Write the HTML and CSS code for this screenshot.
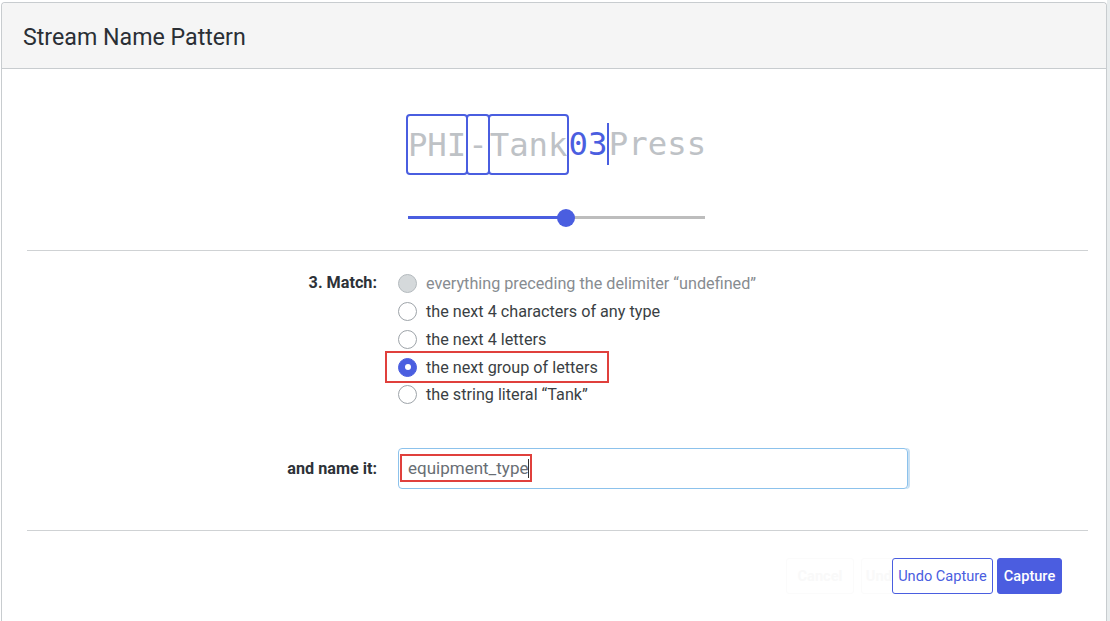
FILE: index.html
```html
<!DOCTYPE html>
<html>
<head>
<meta charset="utf-8">
<link rel="stylesheet" href="styles.css">
</head>
<body>
<div class="page">
  <div class="card">
    <div class="card-header">
      <h1 class="title">Stream Name Pattern</h1>
    </div>
    <div class="card-body">
      <div class="pattern-area">
        <div class="pattern">
          <span class="seg boxed">PHI</span><span class="seg boxed">-</span><span class="seg boxed">Tank</span><span class="seg active">03</span><span class="cursor"></span><span class="seg">Press</span>
        </div>
        <div class="slider">
          <div class="slider-fill"></div>
          <div class="slider-thumb"></div>
        </div>
      </div>
      <hr class="divider">
      <div class="form">
        <div class="form-label match-label">3. Match:</div>
        <div class="options">
          <label class="option disabled"><span class="radio"></span><span>everything preceding the delimiter “undefined”</span></label>
          <label class="option"><span class="radio"></span><span>the next 4 characters of any type</span></label>
          <label class="option"><span class="radio"></span><span>the next 4 letters</span></label>
          <label class="option selected highlighted"><span class="radio"></span><span>the next group of letters</span></label>
          <label class="option"><span class="radio"></span><span>the string literal “Tank”</span></label>
        </div>
        <div class="form-label name-label">and name it:</div>
        <div class="input-wrap">
          <div class="text-input"><span class="input-value">equipment_type<span class="caret"></span></span></div>
        </div>
      </div>
      <hr class="divider footer-divider">
      <div class="actions">
        <button class="btn ghost ghost-cancel">Cancel</button>
        <button class="btn ghost ghost-undo">Undo</button>
        <button class="btn outline">Undo Capture</button>
        <button class="btn primary">Capture</button>
      </div>
    </div>
  </div>
  <div class="side-strip"></div>
</div>
</body>
</html>
```

FILE: styles.css
```css
html, body {
  margin: 0;
  padding: 0;
  background: #ffffff;
}
body {
  font-family: Roboto, "Liberation Sans", Arial, sans-serif;
  color: #212529;
}
.page {
  display: flex;
  height: 621px;
  padding-top: 2px;
  padding-left: 1px;
  box-sizing: border-box;
  overflow: hidden;
}
.card {
  width: 1106px;
  border: 1px solid #c8cccf;
  border-radius: 4px;
  border-bottom: none;
  border-bottom-left-radius: 0;
  border-bottom-right-radius: 0;
  box-sizing: border-box;
  background: #fff;
  flex: none;
}
.side-strip {
  flex: 1;
  background: #e9edee;
  margin-top: -2px;
}
.card-header {
  height: 65px;
  background: #f5f5f5;
  border-bottom: 1px solid #c8cccf;
  border-radius: 4px 4px 0 0;
  display: flex;
  align-items: center;
  padding: 0 21px;
}
.title {
  margin: 0;
  font-size: 23.2px;
  font-weight: 400;
  color: #2a2f35;
  margin-top: 2px;
}
.card-body {
  padding: 0 18px 0 25px;
}
.pattern-area {
  display: flex;
  flex-direction: column;
  align-items: center;
  padding-top: 44px;
}
.pattern {
  display: flex;
  align-items: center;
  height: 62px;
  font-family: "DejaVu Sans Mono", "Liberation Mono", monospace;
  font-size: 32.3px;
  color: #bec2c6;
  position: relative;
  margin-left: -1px;
}
.seg {
  line-height: 58px;
  white-space: pre;
}
.seg.boxed {
  border: 2px solid #4a5ee0;
  border-radius: 4px;
  height: 57px;
  margin: 0 -2px;
}
.seg.boxed + .seg.boxed {
  margin-left: 0;
}
.seg.active {
  color: #4a5ee0;
  margin-left: 1px;
}
.cursor {
  width: 1.5px;
  height: 42px;
  background: #4a5ee0;
}
.slider {
  position: relative;
  width: 297px;
  height: 3px;
  background: #bdbdbd;
  margin-top: 41px;
  margin-left: -2px;
}
.slider-fill {
  width: 158px;
  height: 3px;
  background: #4a5ee0;
}
.slider-thumb {
  position: absolute;
  left: 149px;
  top: -7px;
  width: 18px;
  height: 18px;
  border-radius: 50%;
  background: #4a5ee0;
}
.divider {
  border: none;
  border-top: 1px solid #cfd2d4;
  margin: 31px 0 0 0;
}
.form {
  display: grid;
  grid-template-columns: 350px 1fr;
  column-gap: 21px;
  padding-top: 20px;
}
.form-label {
  text-align: right;
  font-weight: 700;
  font-size: 16.2px;
  color: #2d3238;
}
.match-label {
  line-height: 28px;
  margin-top: -2px;
}
.options {
  display: flex;
  flex-direction: column;
  margin-top: -1px;
}
.option {
  display: flex;
  align-items: center;
  height: 27.75px;
  font-size: 16.2px;
  color: #3a3f44;
  gap: 9px;
  align-self: flex-start;
  position: relative;
}
.radio {
  width: 19px;
  height: 19px;
  border-radius: 50%;
  border: 1px solid #9ea4a9;
  box-sizing: border-box;
  background: #fff;
  flex: none;
  position: relative;
}
.option.disabled {
  color: #878c91;
}
.option.disabled .radio {
  background: #d5d9db;
  border-color: #b4babe;
}
.option.selected .radio {
  background: #4a5ee0;
  border-color: #4a5ee0;
}
.option.selected .radio::after {
  content: "";
  position: absolute;
  left: 5.5px;
  top: 5.5px;
  width: 6px;
  height: 6px;
  border-radius: 50%;
  background: #fff;
}
.option.highlighted::after {
  content: "";
  position: absolute;
  left: -13px;
  right: -11px;
  top: -2px;
  bottom: -2px;
  border: 2px solid #e0403c;
}
.name-label {
  margin-top: 39px;
  line-height: 41px;
}
.input-wrap {
  margin-top: 39px;
}
.text-input {
  width: 510px;
  height: 41px;
  box-sizing: border-box;
  border: 1px solid #8cc2ec;
  border-radius: 4px;
  box-shadow: 2px 0 0 #c9e0f2;
  display: flex;
  align-items: center;
  padding-left: 9px;
}
.input-value {
  font-size: 17px;
  color: #686e74;
  position: relative;
  display: flex;
  align-items: center;
  height: 22px;
}
.input-value::after {
  content: "";
  position: absolute;
  left: -8px;
  right: -3px;
  top: -3px;
  bottom: -3px;
  border: 2px solid #e0403c;
}
.caret {
  width: 1px;
  height: 19px;
  background: #333;
}
.footer-divider {
  margin-top: 41px;
}
.actions {
  display: flex;
  justify-content: flex-end;
  gap: 4px;
  padding-top: 27px;
  padding-right: 26px;
}
.btn {
  height: 36px;
  font-family: Roboto, "Liberation Sans", Arial, sans-serif;
  font-size: 14.6px;
  border-radius: 3px;
  padding: 0;
  white-space: nowrap;
  cursor: pointer;
}
.btn.ghost {
  background: #fff;
  border: 1px solid #fbfbfb;
  color: #f9f9f9;
  font-weight: 700;
}
.ghost-cancel {
  width: 68px;
  margin-right: 3px;
}
.ghost-undo {
  width: 44px;
  margin-right: -17px;
  position: relative;
  z-index: 0;
}
.btn.outline {
  background: #fff;
  border: 1px solid #4a5ee0;
  color: #4a5ee0;
  width: 101px;
  position: relative;
  z-index: 1;
}
.btn.primary {
  background: #4b5de0;
  border: 1px solid #4b5de0;
  color: #fff;
  font-weight: 500;
  width: 65px;
}
```
